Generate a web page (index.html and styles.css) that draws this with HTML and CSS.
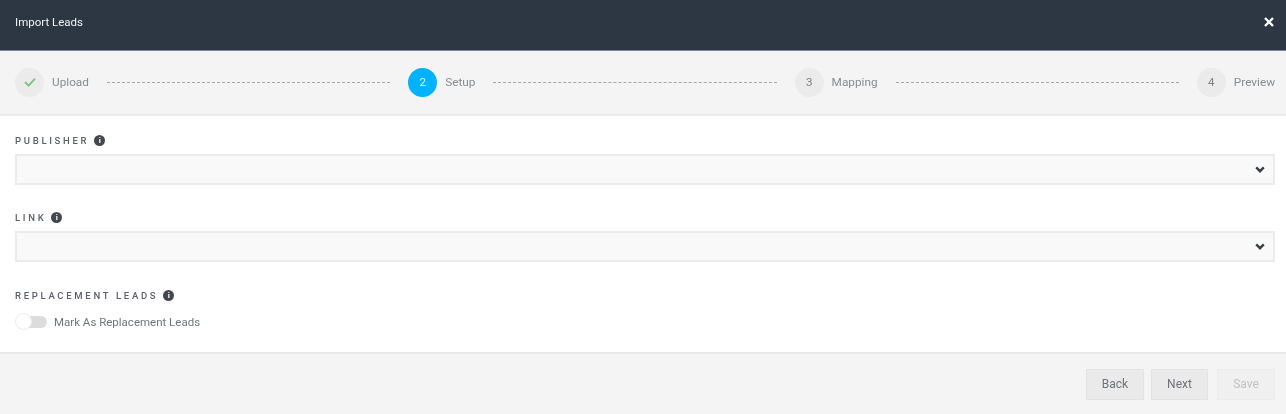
FILE: index.html
```html
<!DOCTYPE html>
<html lang="en">
<head>
<meta charset="utf-8">
<title>Import Leads</title>
<link rel="stylesheet" href="styles.css">
</head>
<body>
<div class="modal">
  <header class="header">
    <span class="title">Import Leads</span>
    <svg class="close" viewBox="0 0 12 12" width="12" height="12"><path d="M2 2l8 8M10 2l-8 8" stroke="#fff" stroke-width="2.4" fill="none"/></svg>
  </header>
  <nav class="stepper">
    <div class="step">
      <span class="circle"><svg viewBox="0 0 12 10" width="12" height="10"><path d="M1 5l3.6 3.6L11 1.6" stroke="#7cc47f" stroke-width="1.8" fill="none"/></svg></span>
      <span class="step-label">Upload</span>
    </div>
    <div class="line"></div>
    <div class="step">
      <span class="circle active">2</span>
      <span class="step-label">Setup</span>
    </div>
    <div class="line"></div>
    <div class="step">
      <span class="circle">3</span>
      <span class="step-label">Mapping</span>
    </div>
    <div class="line"></div>
    <div class="step">
      <span class="circle">4</span>
      <span class="step-label">Preview</span>
    </div>
  </nav>
  <main class="form">
    <div class="field">
      <div class="label"><span>PUBLISHER</span><span class="info">i</span></div>
      <div class="select"><svg viewBox="0 0 10 7" width="10" height="7"><path d="M1.2 1.4L5 5.2l3.8-3.8" stroke="#3a3f47" stroke-width="2.4" fill="none"/></svg></div>
    </div>
    <div class="field">
      <div class="label"><span>LINK</span><span class="info">i</span></div>
      <div class="select"><svg viewBox="0 0 10 7" width="10" height="7"><path d="M1.2 1.4L5 5.2l3.8-3.8" stroke="#3a3f47" stroke-width="2.4" fill="none"/></svg></div>
    </div>
    <div class="field">
      <div class="label"><span>REPLACEMENT LEADS</span><span class="info">i</span></div>
      <div class="toggle-row">
        <span class="toggle"><span class="knob"></span></span>
        <span class="toggle-text">Mark As Replacement Leads</span>
      </div>
    </div>
  </main>
  <footer class="footer">
    <button class="btn back">Back</button>
    <button class="btn next">Next</button>
    <button class="btn save" disabled>Save</button>
  </footer>
</div>
</body>
</html>
```
FILE: styles.css
```css
* { box-sizing: border-box; }
html, body { margin: 0; height: 100%; }
body { font-family: Roboto, "Liberation Sans", sans-serif; font-size: 12px; background: #fff; color: #666b73; overflow: hidden; }
.modal { width: 1286px; height: 414px; display: flex; flex-direction: column; filter: blur(0.4px); }
.header { height: 51px; flex: none; background: #2d3643; border-bottom: 1px solid #7d858e; padding: 0 11px 7px 15px; display: flex; align-items: center; justify-content: space-between; }
.title { color: #f2f3f4; font-size: 11.5px; }
.stepper { height: 65px; flex: none; background: #f4f4f4; border-bottom: 2px solid #e9e9e9; padding: 0 11px 1px 15px; display: flex; align-items: center; }
.step { display: flex; align-items: center; gap: 8px; }
.circle { width: 29px; height: 29px; border-radius: 50%; background: #ebebeb; color: #7d8186; display: flex; align-items: center; justify-content: center; font-size: 11.5px; }
.circle.active { background: #00b2ff; color: #e8f8ff; }
.step-label { color: #888c91; font-size: 11.8px; }
.line { flex: 1; margin: 0 18px; border-top: 1px dashed #a3a5a8; }
.form { height: 236px; flex: none; padding: 17px 11px 0 15px; background: #fff; }
.field { margin-bottom: 25px; }
.field:nth-child(2) { margin-bottom: 26px; }
.label { height: 14px; display: flex; align-items: center; gap: 5px; font-size: 9.5px; font-weight: 500; letter-spacing: 2.7px; color: #5c6068; margin-bottom: 7px; }
.info { width: 11px; height: 11px; border-radius: 50%; background: #43474f; color: #fff; font-size: 8px; font-weight: 700; letter-spacing: 0; display: flex; align-items: center; justify-content: center; }
.select { height: 31px; background: #f9f9f9; border: 2px solid #ebebeb; display: flex; align-items: center; justify-content: flex-end; padding-right: 8px; }
.toggle-row { display: flex; align-items: center; gap: 7px; margin-top: 11px; }
.toggle { width: 32px; height: 17px; position: relative; display: block; }
.toggle::before { content: ""; position: absolute; left: 2px; right: 0; top: 3px; height: 12px; border-radius: 6px; background: #dcdcdc; }
.knob { position: absolute; left: 0; top: 0; width: 17px; height: 17px; border-radius: 50%; background: #fff; border: 1px solid #ebebeb; }
.toggle-text { color: #72767c; font-size: 11.5px; }
.footer { flex: 1; background: #f4f4f4; border-top: 2px solid #e9e9e9; padding: 0 11px 0 0; display: flex; align-items: center; justify-content: flex-end; gap: 7px; }
.btn { width: 58px; height: 31px; padding: 0; background: #eaeaea; border: 1px solid #e3e3e3; color: #6f7277; font-family: inherit; font-size: 12px; }
.back { width: 58px; }
.next { width: 57px; margin-right: 2px; }
.save { background: #f0f0f0; border-color: #ececec; color: #c0c1c3; }
```
